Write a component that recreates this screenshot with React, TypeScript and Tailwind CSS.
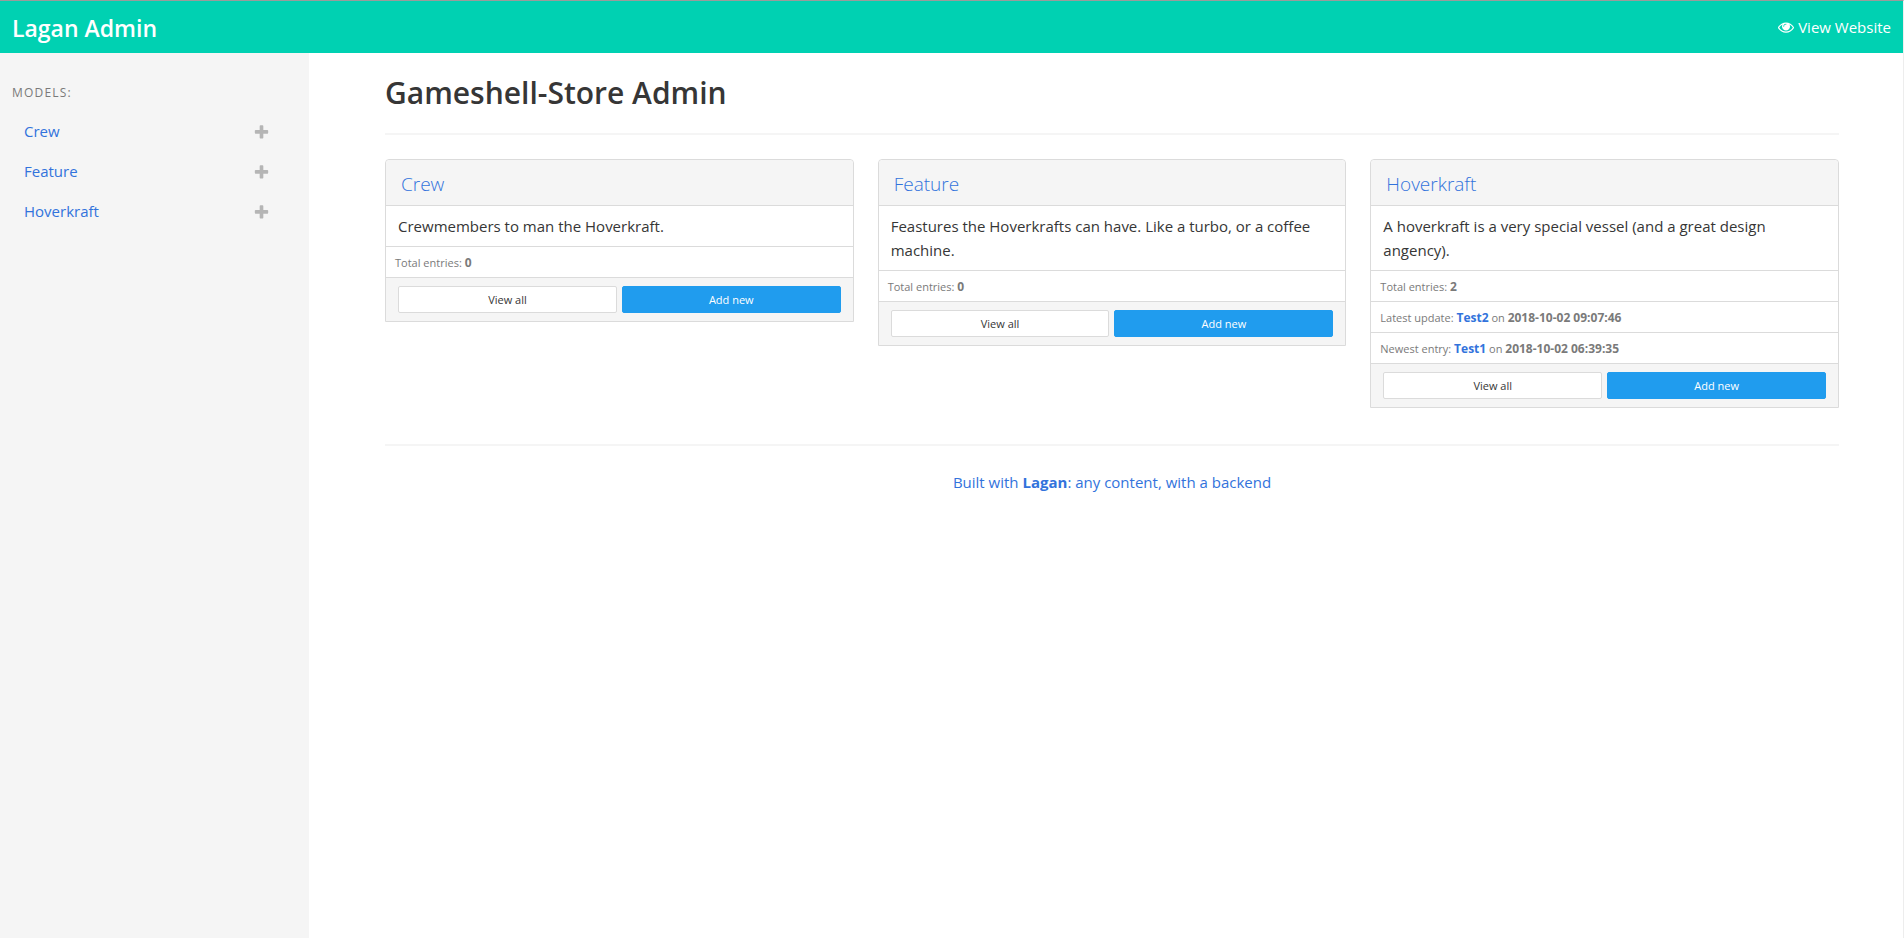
type Entry = { label: string; name?: string; value: string };
type Model = { name: string; description: string; entries: Entry[] };

const models: Model[] = [
  {
    name: "Crew",
    description: "Crewmembers to man the Hoverkraft.",
    entries: [{ label: "Total entries:", value: "0" }],
  },
  {
    name: "Feature",
    description: "Feastures the Hoverkrafts can have. Like a turbo, or a coffee machine.",
    entries: [{ label: "Total entries:", value: "0" }],
  },
  {
    name: "Hoverkraft",
    description: "A hoverkraft is a very special vessel (and a great design angency).",
    entries: [
      { label: "Total entries:", value: "2" },
      { label: "Latest update:", name: "Test2", value: "2018-10-02 09:07:46" },
      { label: "Newest entry:", name: "Test1", value: "2018-10-02 06:39:35" },
    ],
  },
];

function EyeIcon() {
  return (
    <svg viewBox="0 0 1792 1792" className="size-4 fill-current" aria-hidden="true">
      <path d="M1664 960q-152-236-381-353 61 104 61 225 0 185-131.5 316.5t-316.5 131.5-316.5-131.5-131.5-316.5q0-121 61-225-229 117-381 353 133 205 333.5 326.5t434.5 121.5 434.5-121.5 333.5-326.5zm-720-384q0-20-14-34t-34-14q-125 0-214.5 89.5t-89.5 214.5q0 20 14 34t34 14 34-14 14-34q0-86 61-147t147-61q20 0 34-14t14-34zm848 384q0 34-20 69-140 230-376.5 368.5t-499.5 138.5-499.5-139-376.5-368q-20-35-20-69t20-69q140-229 376.5-368t499.5-139 499.5 139 376.5 368q20 35 20 69z" />
    </svg>
  );
}

function PlusIcon() {
  return (
    <svg viewBox="0 0 1792 1792" className="size-[17px] fill-current" aria-hidden="true">
      <path d="M1600 736v192q0 40-28 68t-68 28h-416v416q0 40-28 68t-68 28h-192q-40 0-68-28t-28-68v-416h-416q-40 0-68-28t-28-68v-192q0-40 28-68t68-28h416v-416q0-40 28-68t68-28h192q40 0 68 28t28 68v416h416q40 0 68 28t28 68z" />
    </svg>
  );
}

function ModelCard({ model }: { model: Model }) {
  return (
    <article className="rounded-t border border-[#dbdbdb]">
      <h2 className="rounded-t bg-[#f5f5f5] px-[15px] pt-[10px] pb-[6px] text-[19px] leading-[29px] font-light">
        <a href="#" className="text-[#3273dc]">
          {model.name}
        </a>
      </h2>
      <p className="border-t border-[#dbdbdb] px-3 py-2 leading-6">{model.description}</p>
      {model.entries.map((entry) => (
        <p
          key={entry.label}
          className="border-t border-[#dbdbdb] px-[9px] pt-[7px] pb-[5px] text-[11px] leading-[18px] text-[#7a7a7a]"
        >
          {entry.label}{" "}
          {entry.name && (
            <>
              <a href="#" className="text-xs leading-[18px] font-bold text-[#3273dc]">
                {entry.name}
              </a>{" "}
              on{" "}
            </>
          )}
          <strong className="text-xs leading-[18px]">{entry.value}</strong>
        </p>
      ))}
      <div className="grid grid-cols-2 gap-[5px] border-t border-[#dbdbdb] bg-[#f5f5f5] px-3 py-2 text-center text-[11px] leading-6">
        <a href="#" className="rounded-xs border border-[#dbdbdb] bg-white pt-px">
          View all
        </a>
        <a href="#" className="rounded-xs border border-[#209cee] bg-[#209cee] pt-px font-medium text-white">
          Add new
        </a>
      </div>
    </article>
  );
}

export default function App() {
  return (
    <div className="flex min-h-screen flex-col border-t border-r border-t-[#9b9b9b] border-r-[#ededed] bg-white font-['Open_Sans','Noto_Sans',sans-serif] text-[15px] text-[#363636]">
      <header className="flex h-[52px] items-center justify-between bg-[#00d1b2] px-3 text-white">
        <a href="#" className="pt-[2px] text-[23px] leading-8 font-semibold">
          Lagan Admin
        </a>
        <a href="#" className="flex items-center gap-1 leading-6">
          <EyeIcon />
          View Website
        </a>
      </header>
      <div className="flex grow">
        <aside className="w-[309px] shrink-0 bg-[#f5f5f5] pt-[30px] pr-[39px] pl-3">
          <p className="text-xs leading-5 tracking-widest text-[#7a7a7a] uppercase">Models:</p>
          <ul className="pt-2">
            {models.map((model) => (
              <li key={model.name} className="flex h-10 items-center justify-between pl-3">
                <a href="#" className="text-[#3273dc]">
                  {model.name}
                </a>
                <a href="#" aria-label={`Add ${model.name}`} className="pt-[2px] text-[#b5b5b5]">
                  <PlusIcon />
                </a>
              </li>
            ))}
          </ul>
        </aside>
        <main className="grow pt-[22px] pr-16 pl-[76px]">
          <h1 className="text-[30px] leading-9 font-semibold">Gameshell-Store Admin</h1>
          <hr className="mt-[22px] mb-6 h-[2px] border-0 bg-[#f5f5f5]" />
          <div className="grid grid-cols-3 items-start gap-6">
            {models.map((model) => (
              <ModelCard key={model.name} model={model} />
            ))}
          </div>
          <hr className="mt-9 mb-6 h-[2px] border-0 bg-[#f5f5f5]" />
          <footer className="text-center leading-6">
            <a href="#" className="text-[#3273dc]">
              Built with <strong>Lagan</strong>: any content, with a backend
            </a>
          </footer>
        </main>
      </div>
    </div>
  );
}
